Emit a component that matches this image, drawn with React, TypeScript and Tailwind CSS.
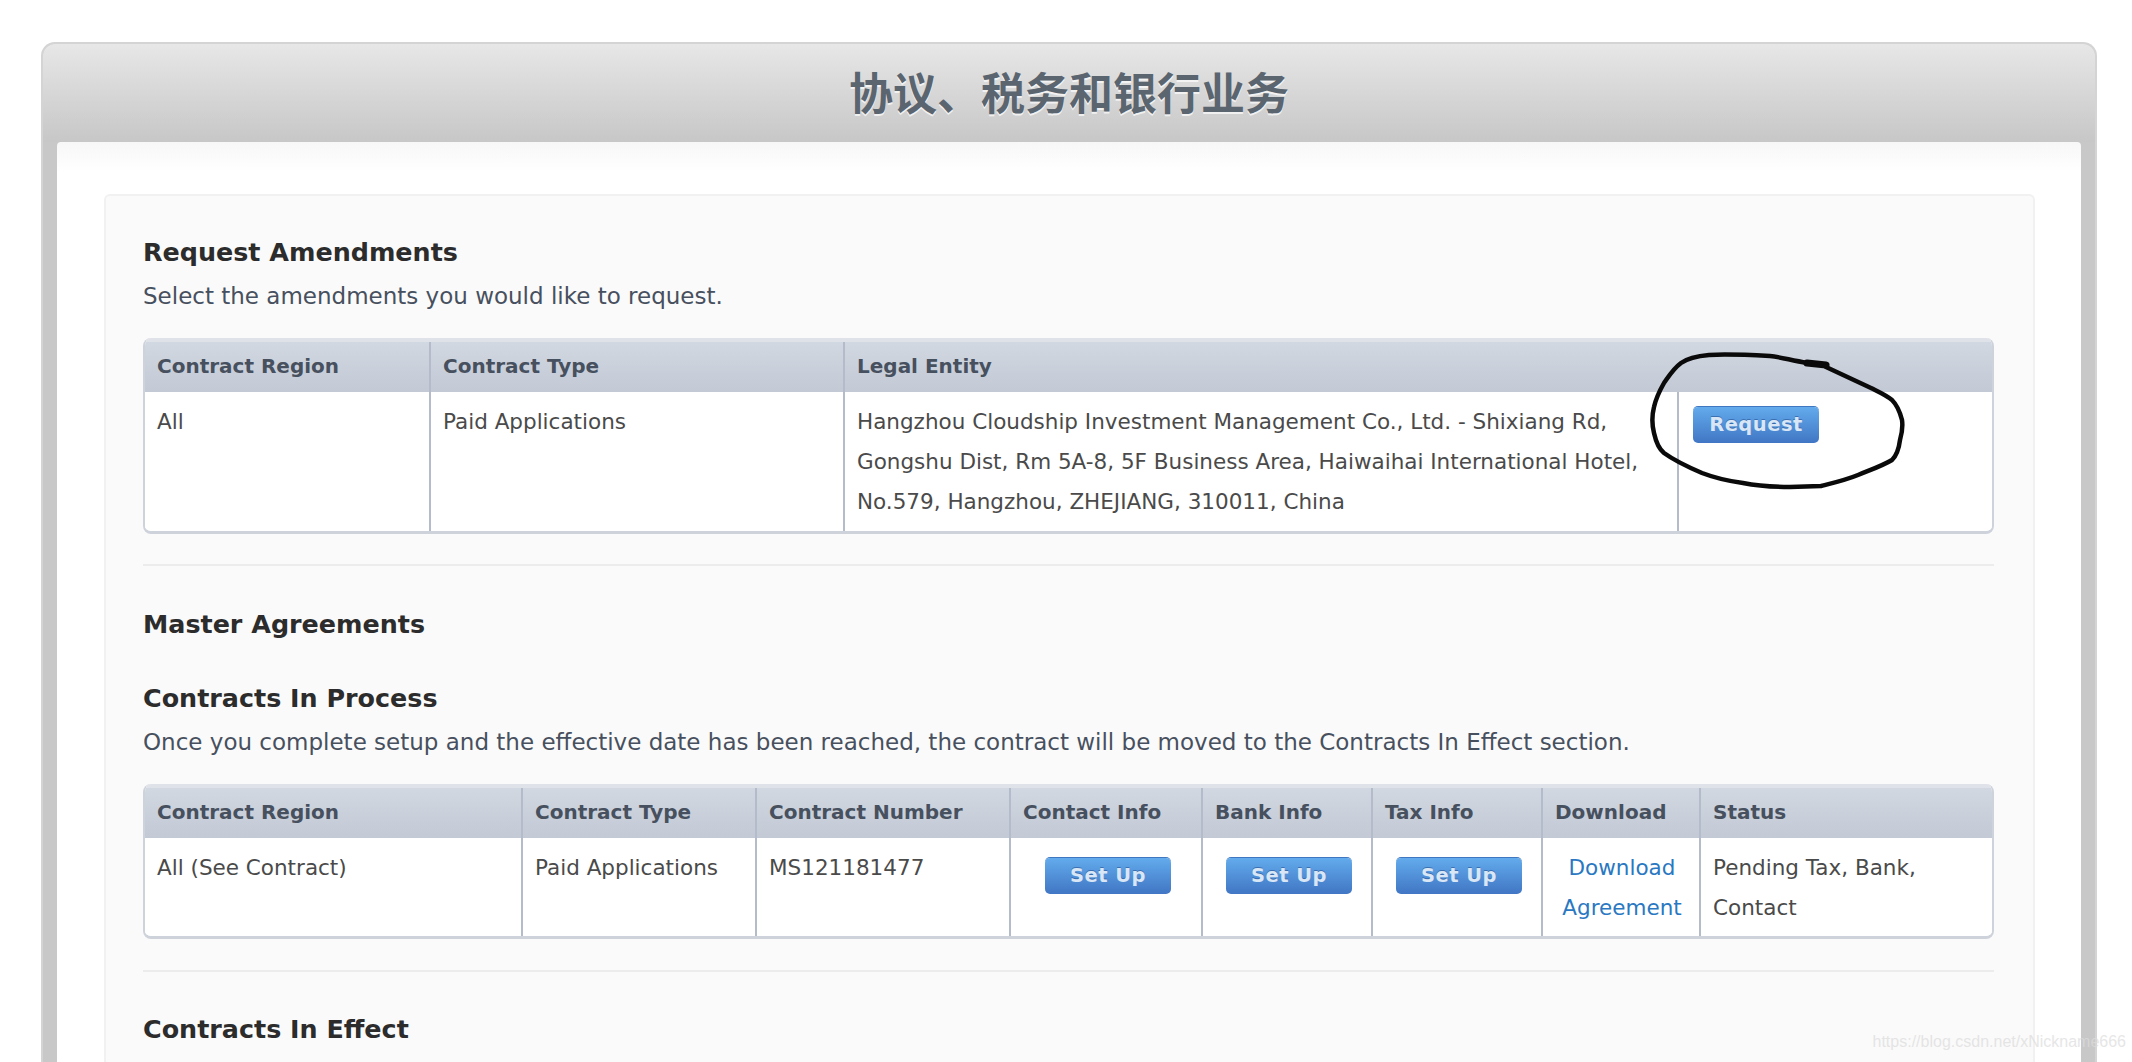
const font = "[font-family:'DejaVu_Sans','Noto_Sans_CJK_SC',sans-serif]";

function Button({ label, className = "" }: { label: string; className?: string }) {
  return (
    <div
      className={`flex h-[36px] w-[126px] items-center justify-center rounded-[5px] bg-gradient-to-b from-[#63abec] to-[#4176c4] text-[19.5px] font-bold tracking-[0.5px] text-[#d8e6f6] shadow-[0_-1px_0_#3f78c0] [text-shadow:0_-1px_0_rgba(30,70,130,0.5)] ${className}`}
    >
      {label}
    </div>
  );
}

function HeadCell({ width, children }: { width?: string; children?: React.ReactNode }) {
  return (
    <div className={`flex h-full items-center border-l-2 border-[#b4bccc] pl-[12px] pb-[3px] text-[20px] font-bold text-[#47505e] first:border-l-0 ${width ?? "flex-1"}`}>
      {children}
    </div>
  );
}

function BodyCell({ width, className = "", children }: { width?: string; className?: string; children?: React.ReactNode }) {
  return (
    <div className={`h-full border-l-2 border-[#b4bccc] pl-[12px] pt-[10px] first:border-l-0 ${width ?? "flex-1"} ${className}`}>
      {children}
    </div>
  );
}

function TableShell({ head, body, bodyHeight }: { head: React.ReactNode; body: React.ReactNode; bodyHeight: string }) {
  return (
    <div className="overflow-hidden rounded-[8px] border-x-2 border-b-[3px] border-[#ced2db]">
      <div className="flex h-[54px] border-t-[4px] border-[#dfe2e9] bg-gradient-to-b from-[#d2d8e1] to-[#c3c9d5]">{head}</div>
      <div className={`flex bg-white text-[21.5px] leading-[40px] text-[#4a4a4a] ${bodyHeight}`}>{body}</div>
    </div>
  );
}

function Title({ children }: { children: React.ReactNode }) {
  return <h2 className="flex h-[40px] items-center pb-[2px] text-[25.4px] font-bold text-[#2c2c2c]">{children}</h2>;
}

function Note({ children }: { children: React.ReactNode }) {
  return <p className="mt-[3px] flex h-[40px] items-center text-[23px] text-[#47505e]">{children}</p>;
}

export default function App() {
  return (
    <div className={`relative h-[1062px] overflow-hidden bg-white pl-[41px] pr-[35px] pt-[42px] ${font}`}>
      <div className="rounded-t-[14px] border-x-2 border-t-2 border-[#d4d4d4] bg-[#c8c8c8] px-[14px]">
        {/* Page title bar */}
        <div className="-mx-[14px] flex h-[98px] items-center justify-center rounded-t-[12px] bg-gradient-to-b from-[#e7e7e7] to-[#c7c7c7] pt-[3px] text-[44px] font-bold text-[#5a6570] [text-shadow:0_2px_0_rgba(255,255,255,0.7)]">
          协议、税务和银行业务
        </div>

        <div className="h-[1000px] rounded-t-[4px] bg-white bg-gradient-to-b from-[#f7f7f7] to-white to-[3%] pl-[47px] pr-[46px] pt-[52px]">
          <div className="h-[900px] rounded-t-[6px] border-x-2 border-t-2 border-[#f1f1f1] bg-[#fafafa] pl-[37px] pr-[39px] pt-[37px]">
            <Title>Request Amendments</Title>
            <Note>Select the amendments you would like to request.</Note>

            <div className="relative mt-[22px]">
              <TableShell
                bodyHeight="h-[139px]"
                head={
                  <>
                    <HeadCell width="w-[284px]">Contract Region</HeadCell>
                    <HeadCell width="w-[414px]">Contract Type</HeadCell>
                    <HeadCell>Legal Entity</HeadCell>
                  </>
                }
                body={
                  <>
                    <BodyCell width="w-[284px]">All</BodyCell>
                    <BodyCell width="w-[414px]">Paid Applications</BodyCell>
                    <BodyCell width="w-[834px]" className="pr-[20px]">
                      Hangzhou Cloudship Investment Management Co., Ltd. - Shixiang Rd, Gongshu Dist, Rm 5A-8, 5F Business Area, Haiwaihai International Hotel, No.579, Hangzhou, ZHEJIANG, 310011, China
                    </BodyCell>
                    <BodyCell className="!pl-[14px] !pt-[15px]">
                      <Button label="Request" />
                    </BodyCell>
                  </>
                }
              />
              {/* Hand-drawn circle */}
              <svg className="absolute left-[1457px] -top-[18px]" width="532" height="240" viewBox="0 0 532 240" fill="none">
                <path
                  d="M227 45 L207 43 C190 40 180 37 170 36 C150 35 125 34 109 35 C98 36 88 38 81 43 C73 49 69 56 64 63 C60 70 56 78 54 87 C52 95 52 105 54 113 C56 122 59 129 64 133 C75 141 88 147 102 153 C115 158 128 161 143 163 C158 166 174 167 190 167 L221 166 C233 163 246 160 258 155 C270 150 282 146 292 140 C297 135 299 128 300 120 C302 113 303 107 302 100 C300 92 297 85 292 80 C286 75 279 72 271 68 L226 47"
                  stroke="#0a0a0a"
                  strokeWidth="4.5"
                  strokeLinecap="round"
                  strokeLinejoin="round"
                />
                <path d="M207 43 L226 45" stroke="#0a0a0a" strokeWidth="7" strokeLinecap="round" />
              </svg>
            </div>

            <div className="mt-[30px] h-[2px] bg-[#ececec]" />

            <div className="mt-[39px]">
              <Title>Master Agreements</Title>
            </div>
            <div className="mt-[34px]">
              <Title>Contracts In Process</Title>
            </div>
            <Note>Once you complete setup and the effective date has been reached, the contract will be moved to the Contracts In Effect section.</Note>

            <div className="mt-[22px]">
              <TableShell
                bodyHeight="h-[98px]"
                head={
                  <>
                    <HeadCell width="w-[376px]">Contract Region</HeadCell>
                    <HeadCell width="w-[234px]">Contract Type</HeadCell>
                    <HeadCell width="w-[254px]">Contract Number</HeadCell>
                    <HeadCell width="w-[192px]">Contact Info</HeadCell>
                    <HeadCell width="w-[170px]">Bank Info</HeadCell>
                    <HeadCell width="w-[170px]">Tax Info</HeadCell>
                    <HeadCell width="w-[158px]">Download</HeadCell>
                    <HeadCell>Status</HeadCell>
                  </>
                }
                body={
                  <>
                    <BodyCell width="w-[376px]">All (See Contract)</BodyCell>
                    <BodyCell width="w-[234px]">Paid Applications</BodyCell>
                    <BodyCell width="w-[254px]">MS121181477</BodyCell>
                    <BodyCell width="w-[192px]" className="!pl-[34px] !pt-[20px]"><Button label="Set Up" /></BodyCell>
                    <BodyCell width="w-[170px]" className="!pl-[23px] !pt-[20px]"><Button label="Set Up" /></BodyCell>
                    <BodyCell width="w-[170px]" className="!pl-[23px] !pt-[20px]"><Button label="Set Up" /></BodyCell>
                    <BodyCell width="w-[158px]" className="!pl-[2px] text-center text-[#2a78c2]">Download Agreement</BodyCell>
                    <BodyCell>Pending Tax, Bank, Contact</BodyCell>
                  </>
                }
              />
            </div>

            <div className="mt-[31px] h-[2px] bg-[#ececec]" />

            <div className="mt-[38px]">
              <Title>Contracts In Effect</Title>
            </div>
          </div>
        </div>
      </div>

      {/* Blog watermark */}
      <div className="absolute bottom-[8px] right-[6px] text-[16px] text-[#dcdcdc] opacity-70 [font-family:'Liberation_Sans',sans-serif]">
        https://blog.csdn.net/xNickname666
      </div>
    </div>
  );
}
